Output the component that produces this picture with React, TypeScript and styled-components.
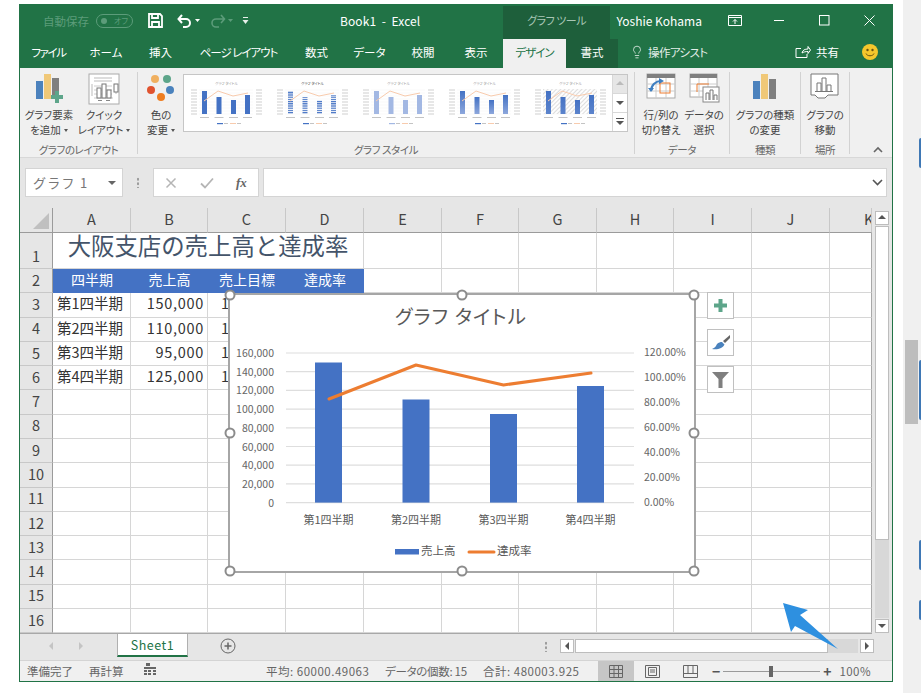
import React from "react";
import styled, { createGlobalStyle } from "styled-components";
import { Lightbulb } from "lucide-react";

const GlobalStyle = createGlobalStyle`
  html, body { margin: 0; padding: 0; background: #fff; }
  body {
    width: 921px;
    height: 693px;
    overflow: hidden;
    font-family: "Noto Sans CJK JP", "Noto Sans", sans-serif;
    font-feature-settings: "palt";
  }
`;

const Page = styled.div`
  position: relative;
  display: flex;
  width: 921px;
  height: 693px;
  overflow: hidden;
`;

const Window = styled.div`
  display: flex;
  flex-direction: column;
  box-sizing: border-box;
  width: 874px;
  height: 678px;
  margin: 4px 0 0 19px;
  border: 1px solid #217346;
  background: #e6e6e6;
`;

const PageScroll = styled.div`
  position: relative;
  width: 18px;
  margin-left: 10px;
  background: #f0f0f0;
`;

const PageThumb = styled.div`
  width: 13px;
  height: 84px;
  margin: 340px 0 0 2px;
  background: #bdbdbd;
`;

const Peek = styled.i<{ $top: number; $h: number }>`
  position: absolute;
  right: 0;
  top: ${(p) => p.$top}px;
  width: 2px;
  height: ${(p) => p.$h}px;
  border-radius: 2px 0 0 2px;
  background: #3f78b5;
`;

/* title bar */
const TitleBar = styled.div`
  display: flex;
  align-items: center;
  box-sizing: border-box;
  height: 34px;
  padding-bottom: 3px;
  background: #217346;
  color: #fff;
  font-size: 11.5px;
`;

const AutoSave = styled.span`
  margin-left: 23px;
  width: 46px;
  color: #5c9c7a;
  font-size: 11.5px;
  white-space: nowrap;
`;

const Toggle = styled.span`
  display: flex;
  align-items: center;
  box-sizing: border-box;
  gap: 7px;
  width: 37px;
  height: 14px;
  margin-left: 7px;
  padding-left: 4px;
  border: 1px solid #5c9c7a;
  border-radius: 8px;
  color: #5c9c7a;
  font-size: 8px;
  &::before {
    content: "";
    width: 6px;
    height: 6px;
    border-radius: 50%;
    background: #5c9c7a;
  }
`;

const Qat = styled.span<{ $ml: number }>`
  display: flex;
  margin-left: ${(p) => p.$ml}px;
`;

const DocTitle = styled.span`
  margin-left: 90px;
  width: 163px;
  font-size: 12px;
  letter-spacing: 0.1px;
  white-space: pre;
`;

const ToolTab = styled.div`
  align-self: flex-end;
  box-sizing: border-box;
  width: 108px;
  height: 33px;
  margin-bottom: -3px;
  padding-top: 6px;
  background: #1e5f3b;
  color: #a9c7b6;
  font-size: 11px;
  letter-spacing: -0.5px;
  text-align: center;
`;

const UserName = styled.span`
  margin-left: 6px;
  width: 96px;
  font-size: 12px;
  white-space: nowrap;
`;

const WinButton = styled.span`
  display: flex;
  justify-content: center;
  width: 45px;
`;

/* tabs */
const TabRow = styled.div`
  display: flex;
  align-items: stretch;
  height: 29px;
  background: #217346;
  color: #fff;
  font-size: 11.5px;
`;

const Tab = styled.div<{ $w: number; $ls?: number; $kind?: "active" | "dark" }>`
  display: flex;
  align-items: center;
  justify-content: center;
  box-sizing: border-box;
  width: ${(p) => p.$w}px;
  padding-bottom: 3px;
  letter-spacing: ${(p) => p.$ls ?? 0}px;
  white-space: nowrap;
  background: ${(p) => (p.$kind === "active" ? "#f0f0f0" : p.$kind === "dark" ? "#1e5f3b" : "transparent")};
  color: ${(p) => (p.$kind === "active" ? "#217346" : "#fff")};
`;

const Assist = styled.div`
  display: flex;
  align-items: center;
  gap: 4px;
  margin-left: 12px;
  padding-bottom: 3px;
  color: #e3eee8;
  letter-spacing: -0.6px;
`;

const Share = styled.div`
  display: flex;
  align-items: center;
  gap: 5px;
  margin-left: auto;
  padding-bottom: 3px;
`;

const Smiley = styled.div`
  display: flex;
  align-items: center;
  margin: 0 14px 0 23px;
  padding-bottom: 3px;
`;

/* ribbon */
const Ribbon = styled.div`
  display: flex;
  height: 90px;
  box-sizing: border-box;
  background: #f0f0f0;
  border-bottom: 1px solid #d8d8d8;
  color: #444;
`;

const Group = styled.section<{ $w: number }>`
  display: flex;
  flex-direction: column;
  box-sizing: border-box;
  width: ${(p) => p.$w}px;
  height: 82px;
  margin-top: 4px;
  border-right: 1px solid #d2d2d2;
`;

const GroupBody = styled.div<{ $pl?: number; $gap?: number; $center?: boolean }>`
  display: flex;
  flex: 1;
  gap: ${(p) => p.$gap ?? 4}px;
  justify-content: ${(p) => (p.$center ? "center" : "flex-start")};
  padding-left: ${(p) => p.$pl ?? 0}px;
`;

const GroupLabel = styled.div`
  height: 15px;
  margin-bottom: -2.5px;
  color: #666;
  font-size: 10.5px;
  letter-spacing: -0.4px;
  line-height: 15px;
  text-align: center;
`;

const RibbonButton = styled.div<{ $w: number }>`
  display: flex;
  flex-direction: column;
  align-items: center;
  width: ${(p) => p.$w}px;
  height: 67px;
`;

const RibbonIcon = styled.div`
  display: flex;
  align-items: flex-start;
  justify-content: center;
  height: 35px;
  padding-top: 1px;
`;

const RibbonText = styled.div`
  font-size: 10.5px;
  line-height: 14.5px;
  text-align: center;
  white-space: pre;
`;

const Caret = styled.i`
  display: inline-block;
  margin-left: 3px;
  vertical-align: 2px;
  border-left: 2.5px solid transparent;
  border-right: 2.5px solid transparent;
  border-top: 3px solid #555;
`;

const Gallery = styled.div`
  display: flex;
  box-sizing: border-box;
  width: 445px;
  height: 58px;
  margin: 2px 0 0 1px;
  border: 1px solid #c6c6c6;
  background: #fff;
`;

const Thumbs = styled.div`
  display: flex;
  flex: 1;
  gap: 9px;
  padding: 4px 0 0 4px;
`;

const GalleryButtons = styled.div`
  display: flex;
  flex-direction: column;
  width: 14px;
  border-left: 1px solid #d8d8d8;
`;

const GalleryButton = styled.div<{ $off?: boolean }>`
  display: flex;
  flex: 1;
  align-items: center;
  justify-content: center;
  background: ${(p) => (p.$off ? "#e6e6e6" : "#fff")};
  & + & { border-top: 1px solid #d8d8d8; }
`;

const Collapse = styled.div`
  display: flex;
  align-items: flex-end;
  justify-content: flex-end;
  flex: 1;
  padding: 0 9px 4px 0;
`;

/* formula bar */
const FormulaBar = styled.div`
  display: flex;
  align-items: center;
  height: 50px;
  padding-bottom: 1px;
  box-sizing: border-box;
`;

const NameBox = styled.div`
  display: flex;
  align-items: center;
  justify-content: space-between;
  box-sizing: border-box;
  width: 98px;
  height: 29px;
  margin-left: 5px;
  padding: 0 5px 0 7px;
  background: #fff;
  border: 1px solid #d4d4d4;
  color: #777;
  font-size: 13px;
  letter-spacing: 1.3px;
  font-feature-settings: normal;
`;

const Dots = styled.div`
  width: 2px;
  height: 11px;
  margin-left: 14px;
  background: radial-gradient(circle, #999 1px, transparent 1.2px) 0 0 / 2px 4.5px;
`;

const FxBox = styled.div`
  display: flex;
  align-items: center;
  justify-content: space-around;
  box-sizing: border-box;
  width: 106px;
  height: 29px;
  margin-left: 14px;
  background: #fff;
  border: 1px solid #d4d4d4;
  color: #b5b5b5;
`;

const Fx = styled.span`
  color: #666;
  font-family: "Liberation Serif", serif;
  font-style: italic;
  font-size: 13px;
  font-weight: 700;
`;

const FormulaInput = styled.div`
  display: flex;
  align-items: center;
  justify-content: flex-end;
  box-sizing: border-box;
  width: 624px;
  height: 29px;
  margin-left: 4px;
  padding-right: 3px;
  background: #fff;
  border: 1px solid #d4d4d4;
`;

/* sheet */
const SheetArea = styled.div`
  position: relative;
  display: flex;
  height: 425.35px;
`;

const Sheet = styled.div`
  display: grid;
  grid-template-columns: 33px 78px 77px 78px 78px 78px 77px 78px 77px 78px 78px 42px;
  grid-template-rows: 25px 36px repeat(15, 24.29px);
  width: 852px;
  background: #fff;
  border-bottom: 1px solid #a8a8a8;
  box-sizing: content-box;
  height: 425.35px;
`;

const Corner = styled.div`
  position: relative;
  background: #e6e6e6;
  border-right: 1px solid #9b9b9b;
  border-bottom: 1px solid #9b9b9b;
  box-sizing: border-box;
  &::after {
    content: "";
    position: absolute;
    right: 3px;
    bottom: 3px;
    width: 16px;
    height: 16px;
    background: #c0c0c0;
    clip-path: polygon(100% 0, 100% 100%, 0 100%);
  }
`;

const ColHead = styled.div<{ $clip?: boolean }>`
  display: flex;
  align-items: center;
  justify-content: ${(p) => (p.$clip ? "flex-start" : "center")};
  box-sizing: border-box;
  padding-left: ${(p) => (p.$clip ? "34px" : "0")};
  padding-bottom: 3px;
  overflow: hidden;
  background: #e6e6e6;
  border-right: 1px solid #c8c8c8;
  border-bottom: 1px solid #9b9b9b;
  color: #444;
  font-size: 14.5px;
`;

const RowHead = styled.div`
  display: flex;
  align-items: flex-end;
  justify-content: center;
  box-sizing: border-box;
  padding-bottom: 2.5px;
  background: #e6e6e6;
  border-right: 1px solid #9b9b9b;
  border-bottom: 1px solid #c8c8c8;
  color: #444;
  font-size: 14.5px;
  line-height: 20px;
`;

const Cell = styled.div<{ $last?: boolean }>`
  box-sizing: border-box;
  overflow: hidden;
  padding: 0 3px 0 4px;
  border-right: 1px solid ${(p) => (p.$last ? "#a8a8a8" : "#d6d6d6")};
  border-bottom: 1px solid #d6d6d6;
  color: #333;
  font-size: 14.5px;
  line-height: 19.5px;
  white-space: nowrap;
  font-feature-settings: normal;
`;

const NumCell = styled(Cell)`
  letter-spacing: 0.7px;
  text-align: right;
`;

/* only the first digit shows beside the chart */
const SliverCell = styled(Cell)`
  padding-left: 13px;
`;

const SheetTitle = styled.div`
  grid-column: span 4;
  box-sizing: border-box;
  border-right: 1px solid #d6d6d6;
  border-bottom: 1px solid #d6d6d6;
  color: #44546a;
  font-size: 23.4px;
  line-height: 24px;
  text-align: center;
  white-space: nowrap;
  font-feature-settings: normal;
`;

const HeadCell = styled.div`
  background: #4472c4;
  color: #fff;
  font-size: 14px;
  line-height: 21px;
  text-align: center;
  white-space: nowrap;
  font-feature-settings: normal;
`;

const VScroll = styled.div`
  display: flex;
  flex-direction: column;
  box-sizing: border-box;
  width: 20px;
  padding: 3px 3px 0 3px;
`;

const ScrollButton = styled.div`
  display: flex;
  align-items: center;
  justify-content: center;
  flex: none;
  box-sizing: border-box;
  width: 14px;
  height: 14px;
  background: #fff;
  border: 1px solid #bdbdbd;
`;

const VThumb = styled.div`
  height: 314px;
  margin-top: 1px;
  box-sizing: border-box;
  background: #fff;
  border: 1px solid #bdbdbd;
`;

const VTrack = styled.div`
  flex: 1;
  margin-bottom: 1px;
  background: #d8d8d8;
`;

/* chart, floats over the cells */
const Chart = styled.div`
  position: absolute;
  left: 208px;
  top: 85px;
  box-sizing: border-box;
  width: 468px;
  height: 280px;
  background: #fff;
  border: 2px solid #a6a6a6;
`;

const ChartSvg = styled.svg`
  display: block;
  width: 464px;
  height: 276px;
  font-family: "Noto Sans CJK JP", sans-serif;
`;

const Handle = styled.i<{ $x: number; $y: number }>`
  position: absolute;
  left: ${(p) => p.$x}%;
  top: ${(p) => p.$y}%;
  box-sizing: border-box;
  width: 11px;
  height: 11px;
  border: 2px solid #8c8c8c;
  border-radius: 50%;
  background: #fff;
  transform: translate(-50%, -50%);
`;

const ChartTools = styled.div`
  position: absolute;
  left: 687px;
  top: 84px;
  display: flex;
  flex-direction: column;
  gap: 10px;
`;

const ChartTool = styled.div`
  display: flex;
  align-items: center;
  justify-content: center;
  box-sizing: border-box;
  width: 27px;
  height: 27px;
  background: #fff;
  border: 1px solid #c0c0c0;
`;

/* sheet tabs */
const TabStrip = styled.div`
  display: flex;
  align-items: flex-start;
  height: 27px;
  background: #e6e6e6;
`;

const TabNav = styled.div`
  display: flex;
  gap: 20px;
  width: 97px;
  height: 26px;
  align-items: center;
  padding-left: 26px;
  box-sizing: border-box;
`;

const SheetTab = styled.div`
  box-sizing: border-box;
  width: 71px;
  height: 24px;
  background: #fff;
  border-left: 1px solid #b0b0b0;
  border-right: 1px solid #b0b0b0;
  border-bottom: 2px solid #217346;
  color: #217346;
  font-size: 12.5px;
  letter-spacing: 0.5px;
  line-height: 24px;
  text-align: center;
`;

const AddSheet = styled.div`
  display: flex;
  margin: 5px 0 0 32px;
`;

const StripDots = styled(Dots)`
  margin: 8px 0 0 309px;
`;

const HScroll = styled.div`
  display: flex;
  align-items: center;
  margin: 6px 0 0 13px;
`;

const HThumb = styled.div`
  box-sizing: border-box;
  width: 253px;
  height: 14px;
  margin-left: 1px;
  background: #fff;
  border: 1px solid #bdbdbd;
`;

const HTrack = styled.div`
  width: 30px;
  height: 14px;
  margin-right: 2px;
  background: #d8d8d8;
`;

/* status bar */
const StatusBar = styled.div`
  display: flex;
  align-items: center;
  flex: 1;
  background: #f0f0f0;
  border-top: 1px solid #d4d4d4;
  color: #666;
  font-size: 11.5px;
  white-space: nowrap;
`;

const StatusText = styled.span<{ $ml: number; $w?: number; $ls?: number }>`
  flex: none;
  margin-left: ${(p) => p.$ml}px;
  width: ${(p) => (p.$w ? `${p.$w}px` : "auto")};
  letter-spacing: ${(p) => p.$ls ?? 0}px;
`;

const ViewButton = styled.span<{ $on?: boolean; $ml?: number }>`
  display: flex;
  align-items: center;
  justify-content: center;
  align-self: stretch;
  width: 36px;
  margin-left: ${(p) => p.$ml ?? 0}px;
  background: ${(p) => (p.$on ? "#c6c6c6" : "transparent")};
`;

const Slider = styled.div`
  position: relative;
  width: 97px;
  height: 1px;
  margin: 0 3px;
  background: #9a9a9a;
  &::after {
    content: "";
    position: absolute;
    left: 46px;
    top: -5px;
    width: 4px;
    height: 11px;
    background: #666;
  }
`;

const ZoomSign = styled.span<{ $ml?: number }>`
  margin-left: ${(p) => p.$ml ?? 0}px;
  color: #555;
  font-size: 14px;
  font-weight: 700;
  line-height: 1;
`;

const Pointer = styled.svg`
  position: absolute;
  left: 780px;
  top: 600px;
  width: 60px;
  height: 52px;
`;

const Tri = ({ dir, color = "#555" }: { dir: "up" | "down" | "left" | "right"; color?: string }) => {
  const d = { up: "M1 6 5 2l4 4z", down: "M1 3l4 4 4-4z", left: "M7 1 3 5l4 4z", right: "M3 1l4 4-4 4z" }[dir];
  return (
    <svg width="10" height="10" viewBox="0 0 10 10">
      <path d={d} fill={color} />
    </svg>
  );
};

const bars = [
  { x: 315, top: 362.5, label: "第1四半期" },
  { x: 402.5, top: 399.5, label: "第2四半期" },
  { x: 490, top: 414, label: "第3四半期" },
  { x: 577, top: 386, label: "第4四半期" },
];
const leftAxis = ["160,000", "140,000", "120,000", "100,000", "80,000", "60,000", "40,000", "20,000", "0"];
const rightAxis = ["120.00%", "100.00%", "80.00%", "60.00%", "40.00%", "20.00%", "0.00%"];

function ChartPlot() {
  return (
    <ChartSvg viewBox="230 295 464 276">
      <text x="461" y="324" fontSize="19.5" letterSpacing="1.2" fill="#595959" textAnchor="middle">グラフ タイトル</text>
      {leftAxis.map((t, i) => {
        const y = 353 + i * 18.7;
        return (
          <g key={t}>
            <line x1="286" x2="634" y1={y} y2={y} stroke="#dedede" strokeWidth="1.2" />
            <text x="274" y={y + 4} fontSize="10.5" fill="#666" textAnchor="end">{t}</text>
          </g>
        );
      })}
      {rightAxis.map((t, i) => (
        <text key={t} x="644" y={356 + i * 25} fontSize="10.5" fill="#666">{t}</text>
      ))}
      {bars.map((b) => (
        <g key={b.label}>
          <rect x={b.x} y={b.top} width="27" height={502.6 - b.top} fill="#4472c4" />
          <text x={b.x + 13.5} y="524" fontSize="11" fill="#595959" textAnchor="middle">{b.label}</text>
        </g>
      ))}
      <polyline points="329,399 416,365 503.5,385 591,373" fill="none" stroke="#ed7d31" strokeWidth="3" strokeLinecap="round" strokeLinejoin="round" />
      <rect x="395" y="549" width="24" height="5.5" fill="#4472c4" />
      <text x="421" y="555" fontSize="11.5" fill="#595959">売上高</text>
      <line x1="469" x2="494" y1="552" y2="552" stroke="#ed7d31" strokeWidth="3" strokeLinecap="round" />
      <text x="497" y="555" fontSize="11.5" fill="#595959">達成率</text>
    </ChartSvg>
  );
}

type ThumbKind = "solid" | "stripe" | "light" | "gradient" | "hatch";

function Thumb({ kind, id }: { kind: ThumbKind; id: string }) {
  const fill = kind === "solid" ? "#4472c4" : kind === "light" ? "#a3b8e3" : `url(#${id})`;
  const hs = [23, 17, 14, 19];
  const xs = [14, 28.5, 43, 57];
  return (
    <svg width="77" height="48" viewBox="0 0 77 48">
      <defs>
        {kind === "stripe" && (
          <pattern id={id} width="3" height="2.2" patternUnits="userSpaceOnUse">
            <rect width="3" height="1.2" fill="#4472c4" />
          </pattern>
        )}
        {kind === "gradient" && (
          <linearGradient id={id} x1="0" x2="0" y1="0" y2="1">
            <stop offset="0" stopColor="#4472c4" />
            <stop offset="1" stopColor="#8da7dc" />
          </linearGradient>
        )}
        {kind === "hatch" && (
          <>
            <pattern id={id + "b"} width="3" height="3" patternUnits="userSpaceOnUse" patternTransform="rotate(45)">
              <rect width="1" height="3" fill="#dcdcdc" />
            </pattern>
            <linearGradient id={id} x1="0" x2="0" y1="0" y2="1">
              <stop offset="0" stopColor="#4472c4" />
              <stop offset="1" stopColor="#5c84cc" />
            </linearGradient>
          </>
        )}
      </defs>
      {kind === "hatch" && <rect x="11" y="10" width="54" height="25" fill={`url(#${id}b)`} />}
      <text x="38.5" y="6" fontSize="3.6" fill={kind === "stripe" ? "#444" : "#999"} textAnchor="middle">グラフ タイトル</text>
      {[11, 14, 17, 20, 23, 26, 29, 32, 35].map((y) => (
        <g key={y}>
          <rect x="3" y={y - 0.4} width="6" height="0.8" fill="#c4c4c4" />
          <rect x="68" y={y - 0.4} width="6" height="0.8" fill="#c4c4c4" />
          <rect x="11" y={y - 0.15} width="54" height="0.3" fill="#ececec" />
        </g>
      ))}
      {xs.map((x, i) => (
        <g key={x}>
          <rect x={x} y={35 - hs[i]} width="5" height={hs[i]} fill={fill} />
          <rect x={x - 2} y="38" width="9" height="1" fill="#c4c4c4" />
        </g>
      ))}
      <polyline points="16,22 30,12 45,17 60,14" fill="none" stroke="#f8cbad" strokeWidth="1" />
      <rect x="29" y="44" width="6" height="1.2" fill={kind === "light" ? "#a3b8e3" : "#4472c4"} />
      <rect x="36" y="44" width="4" height="1" fill="#c4c4c4" />
      <rect x="42" y="44" width="6" height="1" fill="#f8cbad" />
      <rect x="49" y="44" width="4" height="1" fill="#c4c4c4" />
    </svg>
  );
}

const gridCols = ["A", "B", "C", "D", "E", "F", "G", "H", "I", "J", "K"];
const dataRows = [
  ["第1四半期", "150,000"],
  ["第2四半期", "110,000"],
  ["第3四半期", "95,000"],
  ["第4四半期", "125,000"],
];
const handles: [number, number][] = [[0, 0], [50, 0], [100, 0], [0, 50], [100, 50], [0, 100], [50, 100], [100, 100]];

function SheetGrid() {
  const cells: React.ReactNode[] = [<Corner key="corner" />];
  gridCols.forEach((c) => cells.push(<ColHead key={c} $clip={c === "K"}>{c}</ColHead>));
  for (let r = 1; r <= 16; r++) {
    cells.push(<RowHead key={"r" + r}>{r}</RowHead>);
    gridCols.forEach((c, ci) => {
      const key = c + r;
      const last = c === "K";
      if (r === 1) {
        if (ci === 0) cells.push(<SheetTitle key={key}>大阪支店の売上高と達成率</SheetTitle>);
        else if (ci > 3) cells.push(<Cell key={key} $last={last} />);
      } else if (r === 2 && ci < 4) {
        cells.push(<HeadCell key={key}>{["四半期", "売上高", "売上目標", "達成率"][ci]}</HeadCell>);
      } else if (r >= 3 && r <= 6 && ci === 0) {
        cells.push(<Cell key={key}>{dataRows[r - 3][0]}</Cell>);
      } else if (r >= 3 && r <= 6 && ci === 1) {
        cells.push(<NumCell key={key}>{dataRows[r - 3][1]}</NumCell>);
      } else if (r >= 3 && r <= 6 && ci === 2) {
        cells.push(<SliverCell key={key}>1</SliverCell>);
      } else {
        cells.push(<Cell key={key} $last={last} />);
      }
    });
  }
  return <Sheet>{cells}</Sheet>;
}

export default function App() {
  return (
    <Page>
      <GlobalStyle />
      <Window>
        <TitleBar>
          <AutoSave>自動保存</AutoSave>
          <Toggle>オフ</Toggle>
          <Qat $ml={15}>
            <svg width="15" height="15" viewBox="0 0 15 15" fill="none" stroke="#fff" strokeWidth="1.8">
              <path d="M1 1h11l2 2v11H1z" />
              <path d="M4 1v4h6V1M4 14V9h7v5" />
            </svg>
          </Qat>
          <Qat $ml={14}>
            <svg width="24" height="14" viewBox="0 0 24 14" fill="none" stroke="#fff" strokeWidth="2">
              <path d="M5 1 1.5 5 5 9M1.5 5H9a3.6 3.6 0 0 1 0 8H6" />
              <path d="M18 5h5l-2.5 3z" fill="#fff" stroke="none" />
            </svg>
          </Qat>
          <Qat $ml={9}>
            <svg width="24" height="14" viewBox="0 0 24 14" fill="none" stroke="#5c9c7a" strokeWidth="1.6">
              <path d="M11 1l3.5 4L11 9M14.5 5H6a3.6 3.6 0 0 0 0 8h3" />
              <path d="M18 5h5l-2.5 3z" fill="#5c9c7a" stroke="none" />
            </svg>
          </Qat>
          <Qat $ml={8}>
            <svg width="8" height="10" viewBox="0 0 8 10" fill="#e8f0eb">
              <rect x="1" y="1" width="5" height="1" />
              <path d="M0.5 4h6L3.5 8z" />
            </svg>
          </Qat>
          <DocTitle>Book1  -  Excel</DocTitle>
          <ToolTab>グラフ ツール</ToolTab>
          <UserName>Yoshie Kohama</UserName>
          <WinButton>
            <svg width="14" height="12" viewBox="0 0 14 12" fill="none" stroke="#fff">
              <path d="M.5 .5h13v10H.5zM.5 2.5h13M7 9V4.5M5 6.5l2-2 2 2" />
            </svg>
          </WinButton>
          <WinButton>
            <svg width="11" height="11" viewBox="0 0 11 11" stroke="#fff">
              <path d="M0 5.5h10" />
            </svg>
          </WinButton>
          <WinButton>
            <svg width="11" height="11" viewBox="0 0 11 11" fill="none" stroke="#fff">
              <rect x=".5" y=".5" width="9.5" height="9.5" />
            </svg>
          </WinButton>
          <WinButton>
            <svg width="11" height="11" viewBox="0 0 11 11" stroke="#fff">
              <path d="M.5 .5l10 10M10.5 .5l-10 10" />
            </svg>
          </WinButton>
        </TitleBar>

        <TabRow>
          <Tab $w={57} $ls={-1.4}>ファイル</Tab>
          <Tab $w={58}>ホーム</Tab>
          <Tab $w={51}>挿入</Tab>
          <Tab $w={105} $ls={-1}>ページ レイアウト</Tab>
          <Tab $w={51}>数式</Tab>
          <Tab $w={55}>データ</Tab>
          <Tab $w={52}>校閲</Tab>
          <Tab $w={54}>表示</Tab>
          <Tab $w={63} $ls={-1} $kind="active">デザイン</Tab>
          <Tab $w={52} $kind="dark">書式</Tab>
          <Assist>
            <Lightbulb size={14} strokeWidth={1.4} />
            操作アシスト
          </Assist>
          <Share>
            <svg width="16" height="14" viewBox="0 0 16 14" fill="none" stroke="#fff">
              <path d="M6 3.5H1v9h11V9M7 8c.5-3 3-4 6-4V1.5l2.5 3.5L13 8.500V6.500C10.500 6.500 8.500 7 7 8z" />
            </svg>
            共有
          </Share>
          <Smiley>
            <svg width="16" height="16" viewBox="0 0 16 16">
              <circle cx="8" cy="8" r="8" fill="#f5c72c" />
              <circle cx="5.500" cy="6" r="1.200" fill="#6b5310" />
              <circle cx="10.500" cy="6" r="1.200" fill="#6b5310" />
              <path d="M4 9.500c1 3 7 3 8 0" fill="none" stroke="#6b5310" strokeWidth="1" />
            </svg>
          </Smiley>
        </TabRow>

        <Ribbon>
          <Group $w={118}>
            <GroupBody $pl={4}>
              <RibbonButton $w={50}>
                <RibbonIcon>
                  <svg width="30" height="32" viewBox="0 0 30 32">
                    <rect x="2" y="8" width="7" height="18" fill="#4c82bd" />
                    <rect x="10" y="1" width="7" height="25" fill="#f0c878" />
                    <rect x="18" y="5" width="7" height="21" fill="#7f7f7f" />
                    <path d="M21 18h4v4h4v4h-4v4h-4v-4h-4v-4h4z" fill="#5da58a" />
                  </svg>
                </RibbonIcon>
                <RibbonText>{"グラフ要素\nを追加"}<Caret /></RibbonText>
              </RibbonButton>
              <RibbonButton $w={52}>
                <RibbonIcon>
                  <svg width="32" height="32" viewBox="0 0 32 32" fill="none">
                    <rect x="1" y="1" width="30" height="30" fill="#fff" stroke="#aaa" />
                    <path d="M6 5h18M6 8h18" stroke="#bbb" />
                    <path d="M4 11v12M28 11v10" stroke="#ddd" strokeWidth="2" />
                    <path d="M6 25h19M6 13h18M6 17h18M6 21h18" stroke="#ccc" />
                    <rect x="9" y="15" width="4" height="10" fill="#fff" stroke="#777" />
                    <rect x="14" y="11" width="4" height="14" fill="#fff" stroke="#777" />
                    <rect x="19" y="17" width="4" height="8" fill="#fff" stroke="#777" />
                    <rect x="26" y="11" width="4" height="8" fill="#fff" stroke="#777" />
                    <path d="M10 27.500h4M18 27.500h4" stroke="#888" />
                  </svg>
                </RibbonIcon>
                <RibbonText>{"クイック\nレイアウト"}<Caret /></RibbonText>
              </RibbonButton>
            </GroupBody>
            <GroupLabel>グラフのレイアウト</GroupLabel>
          </Group>

          <Group $w={497}>
            <GroupBody $pl={6}>
              <RibbonButton $w={34}>
                <RibbonIcon>
                  <svg width="30" height="28" viewBox="0 0 30 28">
                    <circle cx="9" cy="6" r="4" fill="#f0b060" />
                    <circle cx="21" cy="6" r="4" fill="#5da58a" />
                    <circle cx="5" cy="17" r="4" fill="#e0532f" />
                    <circle cx="24" cy="17" r="4" fill="#4a82bd" />
                    <circle cx="15" cy="24" r="4" fill="#ee7d20" />
                  </svg>
                </RibbonIcon>
                <RibbonText>{"色の\n変更"}<Caret /></RibbonText>
              </RibbonButton>
              <Gallery>
                <Thumbs>
                  <Thumb kind="solid" id="t1" />
                  <Thumb kind="stripe" id="t2" />
                  <Thumb kind="light" id="t3" />
                  <Thumb kind="gradient" id="t4" />
                  <Thumb kind="hatch" id="t5" />
                </Thumbs>
                <GalleryButtons>
                  <GalleryButton $off><Tri dir="up" color="#bbb" /></GalleryButton>
                  <GalleryButton><Tri dir="down" /></GalleryButton>
                  <GalleryButton>
                    <svg width="10" height="10" viewBox="0 0 10 10" fill="#555">
                      <rect x="1" y="1" width="8" height="1" />
                      <path d="M1 4h8L5 8z" />
                    </svg>
                  </GalleryButton>
                </GalleryButtons>
              </Gallery>
            </GroupBody>
            <GroupLabel>グラフ スタイル</GroupLabel>
          </Group>

          <Group $w={95}>
            <GroupBody $pl={6} $gap={3}>
              <RibbonButton $w={40}>
                <RibbonIcon>
                  <svg width="30" height="27" viewBox="0 0 30 27" fill="none">
                    <rect x="1" y="1" width="28" height="24" fill="#fff" stroke="#aaa" />
                    <rect x="1" y="1" width="28" height="4" fill="#808080" />
                    <path d="M1 11h28M1 18h28M10 5v20M20 5v20" stroke="#ccc" />
                    <rect x="14" y="10" width="10" height="10" stroke="#ed7d31" />
                    <path d="M5 18c0-6 5-10 10-10" stroke="#3f7fc1" strokeWidth="2.200" />
                    <path d="M13 5l5 3-5 3zM2 15l3 4 3-4z" fill="#3f7fc1" />
                  </svg>
                </RibbonIcon>
                <RibbonText>{"行/列の\n切り替え"}</RibbonText>
              </RibbonButton>
              <RibbonButton $w={40}>
                <RibbonIcon>
                  <svg width="31" height="30" viewBox="0 0 31 30" fill="none">
                    <rect x="1" y="1" width="27" height="23" fill="#fff" stroke="#aaa" />
                    <rect x="1" y="1" width="27" height="4" fill="#808080" />
                    <path d="M1 11h27M1 18h27M10 5v19M19 5v19" stroke="#ccc" />
                    <path d="M8 19V11h12" stroke="#ed7d31" />
                    <rect x="14" y="14" width="16" height="15" fill="#fff" stroke="#888" />
                    <path d="M17 27v-7h3v7M21 27V17h3v10M25 27v-5h3v5" stroke="#777" />
                  </svg>
                </RibbonIcon>
                <RibbonText>{"データの\n選択"}</RibbonText>
              </RibbonButton>
            </GroupBody>
            <GroupLabel>データ</GroupLabel>
          </Group>

          <Group $w={71}>
            <GroupBody $center>
              <RibbonButton $w={60}>
                <RibbonIcon>
                  <svg width="26" height="28" viewBox="0 0 26 28">
                    <rect x="1" y="8" width="7" height="18" fill="#4c82bd" />
                    <rect x="9" y="1" width="7" height="25" fill="#f0c878" />
                    <rect x="17" y="6" width="7" height="20" fill="#7f7f7f" />
                  </svg>
                </RibbonIcon>
                <RibbonText>{"グラフの種類\nの変更"}</RibbonText>
              </RibbonButton>
            </GroupBody>
            <GroupLabel>種類</GroupLabel>
          </Group>

          <Group $w={49}>
            <GroupBody $center>
              <RibbonButton $w={40}>
                <RibbonIcon>
                  <svg width="30" height="26" viewBox="0 0 30 26" fill="none" stroke="#777">
                    <path d="M1 1h27v21H18l-3 3H8l-3-3H1z" fill="#fff" />
                    <path d="M7 18V10h4v8M12 18V5h4v13M17 18v-6h4v6M5 18.500h18" />
                  </svg>
                </RibbonIcon>
                <RibbonText>{"グラフの\n移動"}</RibbonText>
              </RibbonButton>
            </GroupBody>
            <GroupLabel>場所</GroupLabel>
          </Group>

          <Collapse>
            <svg width="10" height="7" viewBox="0 0 10 7" fill="none" stroke="#666" strokeWidth="1.600">
              <path d="M1 6l4-4 4 4" />
            </svg>
          </Collapse>
        </Ribbon>

        <FormulaBar>
          <NameBox>
            グラフ 1
            <Tri dir="down" color="#666" />
          </NameBox>
          <Dots />
          <FxBox>
            <svg width="12" height="12" viewBox="0 0 12 12" stroke="#b5b5b5" strokeWidth="1.500">
              <path d="M1.500 1.500l9 9M10.500 1.500l-9 9" />
            </svg>
            <svg width="14" height="12" viewBox="0 0 14 12" fill="none" stroke="#b5b5b5" strokeWidth="1.800">
              <path d="M1 6.500l4 4 8-9" />
            </svg>
            <Fx>fx</Fx>
          </FxBox>
          <FormulaInput>
            <svg width="11" height="7" viewBox="0 0 11 7" fill="none" stroke="#555" strokeWidth="1.600">
              <path d="M1 1l4.500 4.500L10 1" />
            </svg>
          </FormulaInput>
        </FormulaBar>

        <SheetArea>
          <SheetGrid />
          <VScroll>
            <ScrollButton><Tri dir="up" /></ScrollButton>
            <VThumb />
            <VTrack />
            <ScrollButton><Tri dir="down" /></ScrollButton>
          </VScroll>
          <Chart>
            <ChartPlot />
            {handles.map(([x, y]) => <Handle key={`${x}-${y}`} $x={x} $y={y} />)}
          </Chart>
          <ChartTools>
            <ChartTool>
              <svg width="15" height="15" viewBox="0 0 15 15">
                <path d="M5.500 1h4v4.500H14v4H9.500V14h-4V9.500H1v-4h4.500z" fill="#5da58a" />
              </svg>
            </ChartTool>
            <ChartTool>
              <svg width="20" height="18" viewBox="0 0 20 18">
                <path d="M19 1l-7 6 2 2 5-5z" fill="#666" />
                <path d="M11 8l2.500 2.500C12 14 7 16 1 15c3-1 4-3 5-5 1.500-1.500 3.500-2 5-2z" fill="#4a82bd" />
              </svg>
            </ChartTool>
            <ChartTool>
              <svg width="19" height="19" viewBox="0 0 19 19">
                <path d="M1 2h17l-6.500 7v9h-4V9z" fill="#7f7f7f" />
              </svg>
            </ChartTool>
          </ChartTools>
        </SheetArea>

        <TabStrip>
          <TabNav>
            <Tri dir="left" color="#c4c4c4" />
            <Tri dir="right" color="#c4c4c4" />
          </TabNav>
          <SheetTab>Sheet1</SheetTab>
          <AddSheet>
            <svg width="16" height="16" viewBox="0 0 16 16" fill="none" stroke="#666">
              <circle cx="8" cy="8" r="7" />
              <path d="M8 4.500v7M4.500 8h7" strokeWidth="1.500" />
            </svg>
          </AddSheet>
          <StripDots />
          <HScroll>
            <ScrollButton><Tri dir="left" /></ScrollButton>
            <HThumb />
            <HTrack />
            <ScrollButton><Tri dir="right" /></ScrollButton>
          </HScroll>
        </TabStrip>

        <StatusBar>
          <StatusText $ml={7} $w={47}>準備完了</StatusText>
          <StatusText $ml={15} $w={35}>再計算</StatusText>
          <StatusText $ml={19} $w={14}>
            <svg width="14" height="13" viewBox="0 0 14 13" fill="#666">
              <rect x="3" y="0" width="4" height="3" />
              <rect x="1" y="4" width="12" height="2" />
              <path d="M1 7h3v2H1zM5 7h3v2H5zM10 7h3v2h-3zM1 10h3v2H1zM5 10h3v2H5zM10 10h3v2h-3z" />
            </svg>
          </StatusText>
          <StatusText $ml={109} $w={103} $ls={0.5}>平均: 60000.49063</StatusText>
          <StatusText $ml={16} $w={83} $ls={-0.3}>データの個数: 15</StatusText>
          <StatusText $ml={15} $w={97} $ls={0.5}>合計: 480003.925</StatusText>
          <ViewButton $on $ml={18}>
            <svg width="14" height="13" viewBox="0 0 14 13" fill="none" stroke="#666">
              <path d="M.5 .5h13v12H.5zM.5 4.500h13M.5 8.500h13M5 .5v12M9.500 .5v12" />
            </svg>
          </ViewButton>
          <ViewButton>
            <svg width="15" height="13" viewBox="0 0 15 13" fill="none" stroke="#666">
              <path d="M.5 .5h14v12H.5zM3.500 2.500h8v8h-8zM5 5h5M5 7h5" />
            </svg>
          </ViewButton>
          <ViewButton $ml={2}>
            <svg width="15" height="13" viewBox="0 0 15 13" fill="none" stroke="#666">
              <path d="M.5 .5h14v12H.5zM.5 8.500h14M5 .5v8M10 .5v8" />
            </svg>
          </ViewButton>
          <ZoomSign $ml={4}>−</ZoomSign>
          <Slider />
          <ZoomSign>+</ZoomSign>
          <StatusText $ml={8} $ls={0.4}>100%</StatusText>
        </StatusBar>
      </Window>

      <PageScroll>
        <PageThumb />
        <Peek $top={138} $h={30} />
        <Peek $top={360} $h={60} />
        <Peek $top={540} $h={30} />
        <Peek $top={600} $h={20} />
      </PageScroll>

      <Pointer viewBox="780 600 60 52">
        <path d="M783 603l25 7-8 5 38 34-43-23-4 6z" fill="#2e90e0" />
      </Pointer>
    </Page>
  );
}
